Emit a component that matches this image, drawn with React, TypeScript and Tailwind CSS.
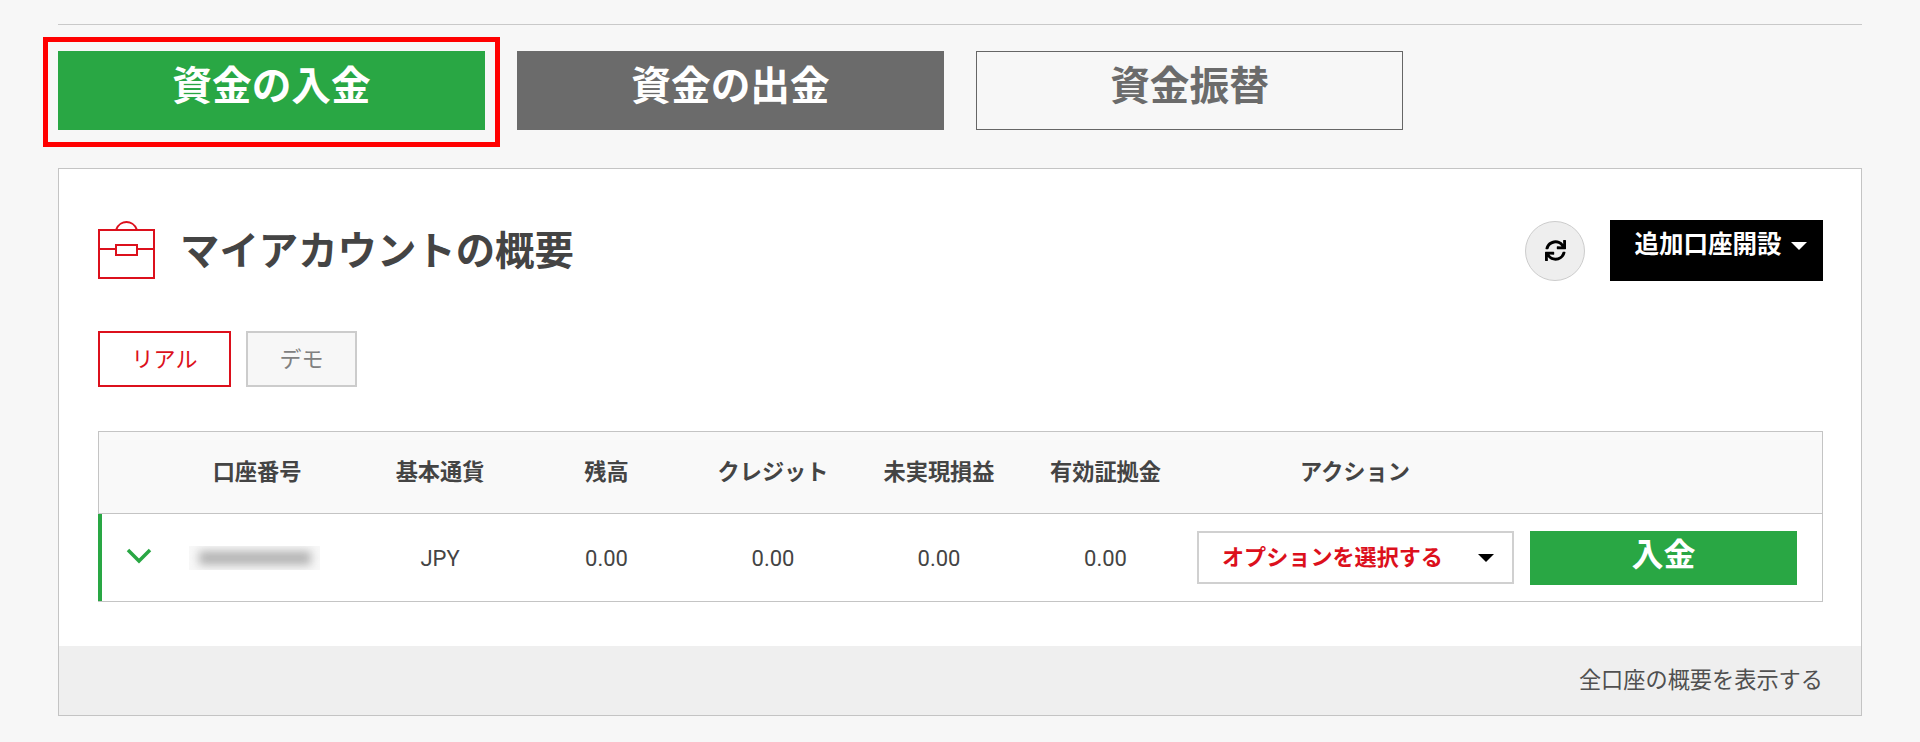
import { FaSync } from "react-icons/fa";

const headers = ["", "口座番号", "基本通貨", "残高", "クレジット", "未実現損益", "有効証拠金"];
const values = ["JPY", "0.00", "0.00", "0.00", "0.00"];

export default function App() {
  return (
    <div className="h-[742px] bg-[#f7f7f7] pl-[58px] pr-[58px] pt-[24px] font-['Roboto','Noto_Sans_CJK_JP',sans-serif] overflow-hidden">
      <div className="border-t border-[#c9c9c9]" />

      {/* Top buttons */}
      <div className="flex gap-[32px] mt-[26px]">
        <div className="relative">
          <div className="w-[427px] h-[79px] bg-[#29a744] text-white text-[39.7px] font-bold flex items-center justify-center pb-[8px]">
            資金の入金
          </div>
          <div className="absolute -left-[15px] -right-[15px] -top-[14px] -bottom-[17px] border-[5px] border-[#ff0000]" />
        </div>
        <div className="w-[427px] h-[79px] bg-[#6b6b6b] text-white text-[39.7px] font-bold flex items-center justify-center pb-[8px]">
          資金の出金
        </div>
        <div className="w-[427px] h-[79px] border border-[#666666] text-[#6b6b6b] text-[39.7px] font-bold flex items-center justify-center pb-[8px]">
          資金振替
        </div>
      </div>

      {/* Account panel */}
      <div className="mt-[38px] h-[548px] bg-white border border-[#c4c4c4] flex flex-col">
        <div className="flex-1 pt-[51px] pl-[39px] pr-[38px]">
          <div className="flex items-center justify-between h-[61px]">
            <div className="flex items-center gap-[25px]">
              <svg width="57" height="58" viewBox="0 0 57 58" fill="none" stroke="#dc101c" strokeWidth="2" className="mb-[2px]">
                <path d="M1 9H56V57H1Z" />
                <path d="M1 28H18M39 28H56" />
                <path d="M18 24H39V34H18Z" />
                <path d="M18 9C20 3 25 1 28.5 1C32 1 37 3 39 9" />
              </svg>
              <h1 className="text-[39.4px] leading-none font-bold text-[#444444] mt-[2px]">マイアカウントの概要</h1>
            </div>
            <div className="flex items-center gap-[25px]">
              <div className="w-[60px] h-[60px] rounded-full bg-[#eeeeee] border border-[#cccccc] flex items-center justify-center">
                <FaSync size={21} className="text-black" />
              </div>
              <div className="w-[213px] h-[61px] bg-black text-white text-[24.5px] font-bold flex items-start justify-center pt-[7px] pl-[8px] gap-[9px]">
                <span>追加口座開設</span>
                <span className="mt-[15px] w-0 h-0 border-x-[8px] border-x-transparent border-t-[8px] border-t-white" />
              </div>
            </div>
          </div>

          {/* Real / demo tabs */}
          <div className="flex gap-[15px] mt-[50px]">
            <div className="w-[133px] h-[56px] border-2 border-[#dc101c] text-[#dc101c] text-[22px] flex items-center justify-center">
              リアル
            </div>
            <div className="w-[111px] h-[56px] border-2 border-[#cccccc] bg-[#f7f7f7] text-[#808080] text-[22px] flex items-center justify-center">
              デモ
            </div>
          </div>

          {/* Account table */}
          <div className="mt-[44px] border border-l-0 border-[#c4c4c4]">
            <div className="grid grid-cols-[58px_200px_166px_167px_166px_166px_167px_1fr] h-[82px] items-center bg-[#f9f9f9] border-l border-b border-[#c4c4c4] text-[22.2px] font-bold text-[#444444] text-center">
              {headers.map((h, i) => (
                <div key={i}>{h}</div>
              ))}
              <div className="w-[332px]">アクション</div>
            </div>
            <div className="grid grid-cols-[50px_205px_166px_167px_166px_166px_167px_1fr] h-[87px] items-center border-l-[4px] border-[#29a744] text-[22px] text-[#444444] text-center">
              <div className="flex justify-end mb-[3px]">
                <svg width="26" height="16" viewBox="0 0 26 16" fill="none" stroke="#29a744" strokeWidth="3.5">
                  <path d="M2 2L13 13L24 2" />
                </svg>
              </div>
              <div className="flex justify-center">
                <div className="w-[131px] h-[24px] bg-[#f8f8f8] flex items-center justify-center overflow-hidden">
                  <div className="w-[112px] h-[14px] bg-[#b4b4b4] blur-[5px]" />
                </div>
              </div>
              {values.map((v, i) => (
                <div key={i} className="pt-[2px]">{v}</div>
              ))}
              <div className="flex items-center gap-[16px] pl-[8px]">
                <div className="w-[317px] h-[53px] border-2 border-[#d0d0d0] flex items-center justify-between pl-[23px] pr-[18px]">
                  <span className="text-[22.1px] font-bold text-[#dc101c]">オプションを選択する</span>
                  <span className="w-0 h-0 border-x-[8px] border-x-transparent border-t-[8px] border-t-black" />
                </div>
                <div className="w-[267px] h-[54px] bg-[#29a744] text-white text-[32px] font-bold flex items-center justify-center pb-[6px]">
                  入金
                </div>
              </div>
            </div>
          </div>
        </div>

        <div className="h-[69px] bg-[#efefef] flex items-center justify-end pr-[38px] text-[22.2px] text-[#505050]">
          全口座の概要を表示する
        </div>
      </div>
    </div>
  );
}
